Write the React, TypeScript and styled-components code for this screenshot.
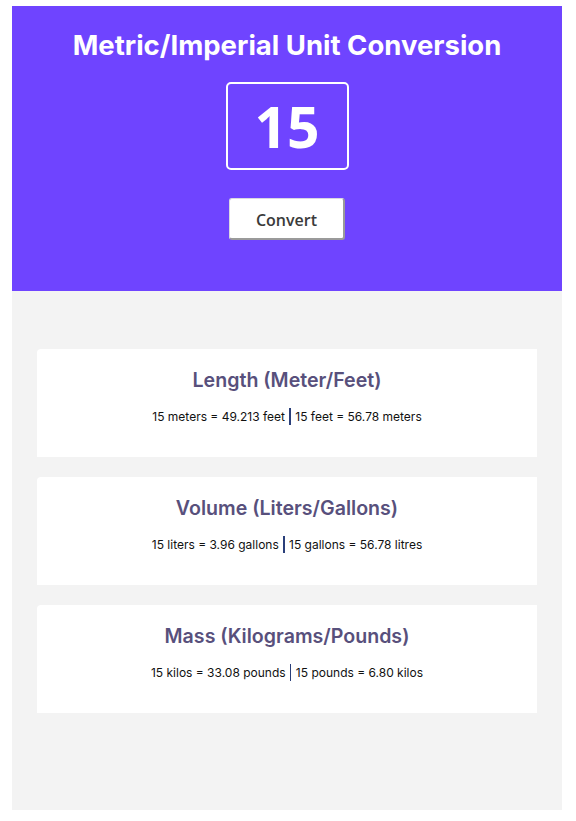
import React from "react";
import styled, { createGlobalStyle } from "styled-components";

const Global = createGlobalStyle`
  html, body { margin: 0; padding: 0; background: #ffffff; }
  body { font-family: Inter, "Noto Sans", sans-serif; }
`;

const Page = styled.div`
  padding: 6px 12px 11px 12px;
`;

const Shell = styled.div`
  width: 550px;
  display: flex;
  flex-direction: column;
`;

const Header = styled.header`
  background: #6f44ff;
  height: 285px;
  box-sizing: border-box;
  padding-top: 25px;
  display: flex;
  flex-direction: column;
  align-items: center;
`;

const Title = styled.h1`
  margin: 0;
  font-family: Inter, sans-serif;
  font-weight: 700;
  font-size: 27.5px;
  line-height: 28px;
  color: #ffffff;
`;

const NumberBox = styled.div`
  margin-top: 23px;
  width: 123px;
  height: 88px;
  box-sizing: border-box;
  border: 2px solid #ffffff;
  border-radius: 5px;
  display: flex;
  align-items: center;
  justify-content: center;
  font-family: "Open Sans", sans-serif;
  font-weight: 700;
  font-size: 57px;
  color: #ffffff;
`;

const ConvertButton = styled.button`
  margin-top: 28px;
  width: 116px;
  height: 42px;
  box-sizing: border-box;
  background: #ffffff;
  border: 1px solid #d8d8e0;
  border-right: 2px solid #9a9a9a;
  border-bottom: 2px solid #9a9a9a;
  border-radius: 3px;
  font-family: "Open Sans", sans-serif;
  font-weight: 600;
  font-size: 16px;
  color: #3a3a3a;
  padding: 3px 0 0 0;
`;

const Results = styled.main`
  background: #f3f3f3;
  height: 519px;
  box-sizing: border-box;
  padding: 58px 25px 0 25px;
  display: flex;
  flex-direction: column;
  gap: 20px;
`;

const Card = styled.section`
  background: #ffffff;
  height: 108px;
  border-radius: 4px 0 0 0;
  box-sizing: border-box;
  padding-top: 19px;
  display: flex;
  flex-direction: column;
  align-items: center;
`;

const CardTitle = styled.h2`
  margin: 0;
  font-family: Inter, sans-serif;
  font-weight: 600;
  font-size: 19.6px;
  line-height: 24px;
  color: #58507c;
`;

const CardText = styled.p`
  margin: 16px 0 0 0;
  font-family: Inter, sans-serif;
  font-weight: 400;
  font-size: 12px;
  line-height: 16px;
  color: #111111;
  white-space: pre;
`;

const Sep = styled.span`
  display: inline-block;
  width: 1.5px;
  height: 17px;
  margin: 0 1px;
  background: #2a3f7a;
  vertical-align: -4px;
`;

const data = [
  { title: "Length (Meter/Feet)", a: "15 meters = 49.213 feet", b: "15 feet = 56.78 meters" },
  { title: "Volume (Liters/Gallons)", a: "15 liters = 3.96 gallons", b: "15 gallons = 56.78 litres" },
  { title: "Mass (Kilograms/Pounds)", a: "15 kilos = 33.08 pounds", b: "15 pounds = 6.80 kilos" },
];

export default function App() {
  return (
    <Page>
      <Global />
      <Shell>
        <Header>
          <Title>Metric/Imperial Unit Conversion</Title>
          <NumberBox>15</NumberBox>
          <ConvertButton>Convert</ConvertButton>
        </Header>
        <Results>
          {data.map((d) => (
            <Card key={d.title}>
              <CardTitle>{d.title}</CardTitle>
              <CardText>
                {d.a + " "}
                <Sep />
                {" " + d.b}
              </CardText>
            </Card>
          ))}
        </Results>
      </Shell>
    </Page>
  );
}
